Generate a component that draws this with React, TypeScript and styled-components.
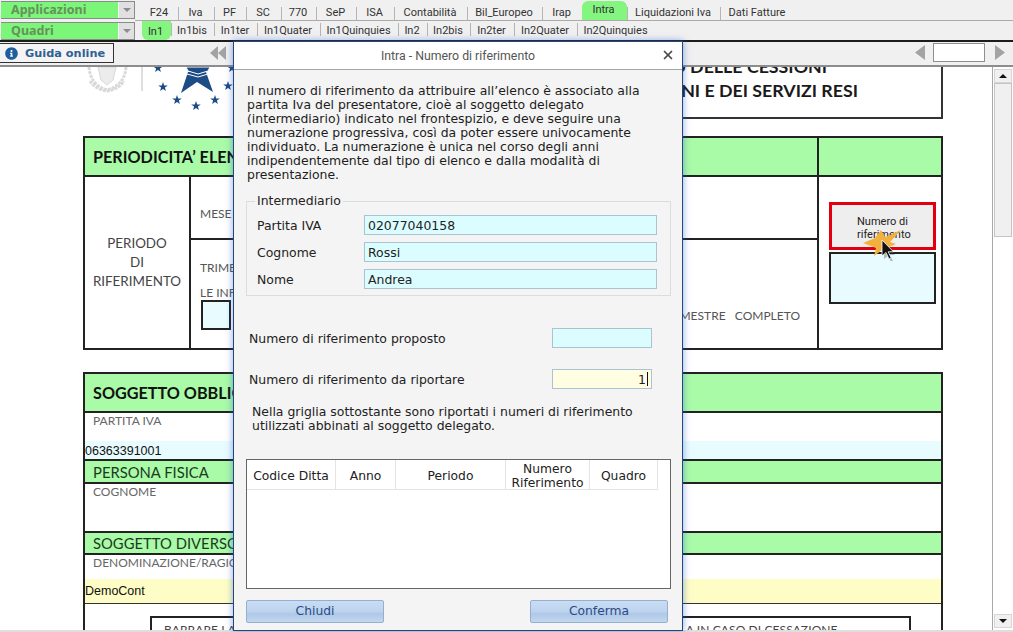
import * as React from 'react';
import styled, { createGlobalStyle } from 'styled-components';
import { FaInfoCircle } from 'react-icons/fa';
import { X } from 'lucide-react';

const GlobalStyle = createGlobalStyle`
  html, body {
    margin: 0;
    padding: 0;
    overflow: hidden;
    background: #f0f0f0;
  }
  * {
    box-sizing: border-box;
  }
`;

const Page = styled.div`
  position: relative;
  width: 1013px;
  height: 632px;
  overflow: hidden;
  display: flex;
  flex-direction: column;
  background: #f0f0f0;
`;

/* top menu */
const Menu = styled.div`
  height: 42px;
  flex: none;
  display: flex;
  border-bottom: 2px solid #1c1c1c;
  padding: 1px 0 0 1px;
`;
const Selects = styled.div`
  width: 134px;
  flex: none;
  display: flex;
  flex-direction: column;
  gap: 3px;
`;
const Select = styled.div`
  height: 18px;
  display: flex;
  border: 1px solid #8a8a8a;
  border-left: 0;
`;
const SelectValue = styled.div`
  flex: 1;
  background: #7cf678;
  color: #67905f;
  font: bold 12.5px/16px 'Noto Sans', sans-serif;
  padding-left: 10px;
`;
const SelectArrow = styled.div`
  width: 16px;
  background: #e0e0e0;
  border-left: 1px solid #f4f4f4;
  display: flex;
  align-items: center;
  justify-content: center;
  &::before {
    content: '';
    border-left: 4px solid transparent;
    border-right: 4px solid transparent;
    border-top: 4px solid #8c8c8c;
  }
`;
const TabRows = styled.div`
  flex: 1;
  display: flex;
  flex-direction: column;
  margin-top: -1px;
  padding-left: 7px;
`;
const TabRow = styled.div<{ $lined?: boolean }>`
  height: ${(p) => (p.$lined ? '21px' : '20px')};
  display: flex;
  align-items: ${(p) => (p.$lined ? 'flex-end' : 'flex-start')};
  margin-left: -7px;
  padding-left: 7px;
  border-bottom: ${(p) => (p.$lined ? '1px solid #ababab' : '0')};
`;
const Tab = styled.div<{ $w: number; $active?: boolean; $flip?: boolean }>`
  width: ${(p) => p.$w}px;
  height: ${(p) => (p.$active ? '19px' : '13px')};
  margin-top: ${(p) => (p.$flip && !p.$active ? '2px' : '0')};
  padding: ${(p) => (p.$flip ? '2px 2px 0 0' : '0 2px 2px 0')};
  display: flex;
  align-items: center;
  justify-content: center;
  font: 11px 'Roboto', sans-serif;
  color: #333;
  border-left: ${(p) => (p.$active ? '0' : '1px solid #b5b5b5')};
  background: ${(p) => (p.$active ? '#84f57f' : 'transparent')};
  border-radius: ${(p) => (p.$active ? (p.$flip ? '0 0 6px 6px' : '6px 6px 0 0') : '0')};
  &:first-child {
    border-left: 0;
  }
`;

/* toolbar */
const Toolbar = styled.div`
  height: 25px;
  flex: none;
  display: flex;
  align-items: center;
  border-bottom: 2px solid #8d8d8d;
  padding: 0 8px 2px 0;
`;
const GuideButton = styled.div`
  width: 114px;
  height: 20px;
  display: flex;
  align-items: center;
  gap: 7px;
  padding-left: 5px;
  margin-top: 1px;
  background: #f4f4f4;
  border: 1px solid #333;
  border-left: 0;
  color: #2f6090;
  font: bold 11.3px 'DejaVu Sans', sans-serif;
  svg {
    color: #1f5f9f;
    width: 13px;
    height: 13px;
  }
`;
const Pager = styled.div`
  margin-left: auto;
  display: flex;
  align-items: center;
  gap: 8px;
`;
const PagerInput = styled.div`
  width: 52px;
  height: 19px;
  margin-right: 2px;
  background: #fff;
  border: 1px solid #8f8f8f;
`;
const PagerArrow = styled.svg`
  width: 10px;
  height: 15px;
  fill: #a3a3a3;
`;
const RewindIcon = styled.svg`
  width: 16px;
  height: 14px;
  fill: #a3a3a3;
  margin-left: 96px;
`;

/* sheet behind the dialog */
const Main = styled.div`
  flex: 1;
  min-height: 0;
  display: flex;
`;
const Sheet = styled.div`
  flex: 1;
  background: #fff;
  padding-left: 83px;
  overflow: hidden;
  border-right: 1px solid #a8a8a8;
  font-family: 'Lato', sans-serif;
`;
const SheetInner = styled.div`
  width: 860px;
`;
const SheetHead = styled.div`
  height: 52px;
  display: flex;
`;
const Logos = styled.svg`
  width: 157px;
  height: 51px;
  flex: none;
`;
const TitleBox = styled.div`
  flex: 1;
  min-width: 0;
  border: 2px solid #333;
  border-top: 0;
  display: flex;
  flex-direction: column;
  justify-content: flex-end;
  align-items: flex-end;
  overflow: hidden;
  padding: 0 83px 15px 0;
  font-size: 17.8px;
  font-weight: 700;
  line-height: 24px;
  color: #1a1a1a;
  white-space: nowrap;
`;
const TitleLine = styled.div<{ $inset?: number }>`
  margin-right: ${(p) => p.$inset ?? 0}px;
`;
const PeriodBox = styled.div`
  margin-top: 17px;
  height: 214px;
  border: 2px solid #222;
  display: grid;
  grid-template-columns: 106px 626px 1fr;
  grid-template-rows: 39px 63px 1fr;
`;
const GreenHead = styled.div<{ $span?: number; $h?: number; $bold?: boolean }>`
  grid-column: span ${(p) => p.$span ?? 1};
  background: #a9fba7;
  border-bottom: 2px solid #222;
  padding-left: 8px;
  display: flex;
  align-items: center;
  height: ${(p) => (p.$h ? `${p.$h}px` : 'auto')};
  font-size: ${(p) => (p.$bold ? '16.2px' : '14.8px')};
  font-weight: ${(p) => (p.$bold ? 700 : 400)};
  color: ${(p) => (p.$bold ? '#111' : '#1d3a1f')};
  white-space: nowrap;
`;
const GreenEnd = styled(GreenHead)`
  border-left: 2px solid #222;
`;
const PeriodLabel = styled.div`
  grid-row: span 2;
  border-right: 2px solid #222;
  display: flex;
  align-items: center;
  justify-content: center;
  text-align: center;
  font-size: 13.4px;
  line-height: 19px;
  color: #444;
`;
const MonthCell = styled.div`
  border-bottom: 2px solid #222;
  padding: 29px 0 0 9px;
  font-size: 12px;
  color: #555;
`;
const QuarterCell = styled.div`
  padding: 20px 17px 0 9px;
  font-size: 12px;
  color: #555;
`;
const QuarterLine = styled.div`
  height: 25px;
`;
const QuarterBottom = styled.div`
  display: flex;
  justify-content: space-between;
`;
const TickBox = styled.div`
  width: 30px;
  height: 30px;
  margin: 0 0 0 1px;
  background: #e8fcff;
  border: 2px solid #222;
`;
const WholeQuarter = styled.div`
  white-space: pre;
  font-size: 12px;
  margin-top: 8px;
`;
const ActionCell = styled.div`
  grid-column: 3;
  grid-row: 2 / span 2;
  border-left: 2px solid #222;
  padding: 25px 0 0 10px;
  position: relative;
`;
const RefButton = styled.div`
  width: 107px;
  height: 48px;
  background: #eeeeee;
  border: 3px solid #e2000f;
  padding: 10px 0 0 25px;
  font: 11px/13px 'Roboto', sans-serif;
  color: #222;
`;
const RefValue = styled.div`
  width: 107px;
  height: 52px;
  margin-top: 2px;
  background: #e8fcff;
  border: 2px solid #222;
`;
const Pointer = styled.svg`
  position: absolute;
  left: 43px;
  top: 50px;
  width: 42px;
  height: 34px;
`;
const SubjectBox = styled.div`
  margin-top: 22px;
  border: 2px solid #222;
  border-bottom: 0;
  height: 300px;
`;
const FieldLabel = styled.div<{ $h: number; $lined?: boolean }>`
  height: ${(p) => p.$h}px;
  padding-left: 8px;
  border-bottom: ${(p) => (p.$lined ? '2px solid #222' : '0')};
  font-size: 12px;
  line-height: 15px;
  color: #666;
  white-space: nowrap;
`;
const Value = styled.div<{ $tone: string; $h: number; $line: string; $nudge?: number }>`
  height: ${(p) => p.$h}px;
  padding-top: ${(p) => p.$nudge ?? 0}px;
  background: ${(p) => p.$tone};
  border-bottom: ${(p) => p.$line};
  display: flex;
  align-items: center;
  font: 12.5px 'Liberation Sans', sans-serif;
  color: #111;
`;
const NoticeBox = styled.div`
  margin: 12px 0 0 65px;
  width: 761px;
  height: 60px;
  border: 2px solid #222;
  padding: 4px 0 0 12px;
  font-size: 12px;
  letter-spacing: 0.1px;
  line-height: 16px;
  color: #444;
  white-space: nowrap;
`;

/* scrollbar */
const Scrollbar = styled.div`
  width: 20px;
  flex: none;
  background: #fff;
  display: flex;
  flex-direction: column;
  padding: 2px 1px 2px 1px;
`;
const ScrollStep = styled.div<{ $down?: boolean }>`
  height: 14px;
  flex: none;
  background: #f0f0f0;
  border: 1px solid #d6d6d6;
  display: flex;
  align-items: center;
  justify-content: center;
  &::before {
    content: '';
    border-left: 4px solid transparent;
    border-right: 4px solid transparent;
    ${(p) => (p.$down ? 'border-top: 4px solid #111;' : 'border-bottom: 4px solid #111;')}
  }
`;
const ScrollThumb = styled.div`
  height: 154px;
  flex: none;
  background: #f0f0f0;
  border: 1px solid #c4c4c4;
`;
const ScrollTrack = styled.div`
  flex: 1;
`;
const BottomEdge = styled.div`
  height: 2px;
  flex: none;
  background: #dedede;
`;

/* dialog */
const Dialog = styled.div`
  position: absolute;
  left: 233px;
  top: 41px;
  width: 450px;
  height: 590px;
  background: #f4f4f4;
  border: 1px solid #1f4a78;
  box-shadow: 0 0 7px rgba(50, 90, 210, 0.55);
  font-family: 'DejaVu Sans', sans-serif;
  color: #222;
`;
const DialogTitle = styled.div`
  position: relative;
  height: 28px;
  background: #fff;
  border-bottom: 1px solid #a6a6a6;
  display: flex;
  align-items: center;
  justify-content: center;
  font: 12.3px 'Roboto', sans-serif;
  color: #555;
`;
const CloseButton = styled.div`
  position: absolute;
  right: 7px;
  top: 6px;
  display: flex;
  color: #4a4a4a;
`;
const DialogBody = styled.div`
  padding: 14px 0 0 12px;
`;
const Intro = styled.div`
  padding-left: 1px;
  font-size: 12.45px;
  line-height: 14px;
  white-space: pre;
  color: #1c1c1c;
`;
const Group = styled.fieldset`
  margin: 12px 0 0;
  padding: 7px 0 7px 10px;
  width: 425px;
  height: 102px;
  border: 1px solid #dcdcdc;
  display: flex;
  flex-direction: column;
  gap: 7px;
`;
const GroupTitle = styled.legend`
  margin-left: -2px;
  padding: 0 2px;
  font-size: 12.45px;
  line-height: 14px;
`;
const GroupRow = styled.div`
  display: flex;
  align-items: center;
  font-size: 12.45px;
`;
const GroupLabel = styled.div`
  width: 107px;
`;
const TextBox = styled.div<{ $w: number; $yellow?: boolean }>`
  width: ${(p) => p.$w}px;
  height: 20px;
  flex: none;
  display: flex;
  align-items: center;
  justify-content: ${(p) => (p.$yellow ? 'flex-end' : 'flex-start')};
  padding: 0 3px 0 3px;
  background: ${(p) => (p.$yellow ? '#fffde2' : '#dcfdff')};
  border: 1px solid #a9c3d3;
  font-size: 12.45px;
`;
const Caret = styled.span`
  width: 1px;
  height: 14px;
  background: #111;
  margin-left: 1px;
`;
const RefRow = styled.div<{ $top: number }>`
  width: 406px;
  margin-top: ${(p) => p.$top}px;
  padding-left: 3px;
  display: flex;
  align-items: center;
  justify-content: space-between;
  font-size: 12.45px;
`;
const GridNote = styled.div`
  margin-top: 16px;
  padding-left: 6px;
  font-size: 12.45px;
  line-height: 14px;
  white-space: pre;
`;
const Grid = styled.div`
  margin-top: 26px;
  width: 425px;
  height: 130px;
  background: #fff;
  border: 1px solid #666;
`;
const GridHead = styled.div`
  display: flex;
  height: 30px;
  width: 411px;
  border-bottom: 1px solid #e4e4e4;
`;
const GridCol = styled.div<{ $w: number }>`
  width: ${(p) => p.$w}px;
  padding-top: 2px;
  display: flex;
  align-items: center;
  justify-content: center;
  text-align: center;
  border-right: 1px solid #e4e4e4;
  font-size: 12.3px;
  line-height: 14px;
`;
const Actions = styled.div`
  margin-top: 11px;
  width: 422px;
  display: flex;
  justify-content: space-between;
`;
const ActionButton = styled.div`
  width: 138px;
  height: 23px;
  padding-bottom: 2px;
  display: flex;
  align-items: center;
  justify-content: center;
  border: 1px solid #94afcf;
  border-radius: 2px;
  background: linear-gradient(#c9dcf3 0%, #bdd3ee 50%, #aec8e6 62%, #c3d8f0 100%);
  color: #2b4a86;
  font-size: 12.3px;
`;

const menuTabs: [string, number][] = [
  ['F24', 36], ['Iva', 36], ['PF', 32], ['SC', 35], ['770', 35], ['SeP', 40], ['ISA', 38],
  ['Contabilità', 73], ['Bil_Europeo', 75], ['Irap', 40], ['Intra', 45],
  ['Liquidazioni Iva', 93], ['Dati Fatture', 75],
];
const formTabs: [string, number][] = [
  ['In1', 29], ['In1bis', 43], ['In1ter', 43], ['In1Quater', 63], ['In1Quinquies', 78],
  ['In2', 29], ['In2bis', 43], ['In2ter', 44], ['In2Quater', 63], ['In2Quinquies', 78],
];
const gridCols: [React.ReactNode, number][] = [
  ['Codice Ditta', 89], ['Anno', 60], ['Periodo', 110], [<>Numero<br />Riferimento</>, 84], ['Quadro', 68],
];
const intro = `Il numero di riferimento da attribuire all’elenco è associato alla
partita Iva del presentatore, cioè al soggetto delegato
(intermediario) indicato nel frontespizio, e deve seguire una
numerazione progressiva, così da poter essere univocamente
individuato. La numerazione è unica nel corso degli anni
indipendentemente dal tipo di elenco e dalla modalità di
presentazione.`;

const starPoints = (cx: number, cy: number, r: number) =>
  Array.from({ length: 10 }, (_, i) => {
    const a = (Math.PI / 5) * i - Math.PI / 2;
    const d = i % 2 ? r * 0.4 : r;
    return `${(cx + d * Math.cos(a)).toFixed(1)},${(cy + d * Math.sin(a)).toFixed(1)}`;
  }).join(' ');

const stars = [[75, 1], [80, 20], [94, 33], [113, 39], [132, 33], [145, 19], [149, 1]];

const App = () => (
  <Page>
    <GlobalStyle />
    <Menu>
      <Selects>
        <Select>
          <SelectValue>Applicazioni</SelectValue>
          <SelectArrow />
        </Select>
        <Select>
          <SelectValue>Quadri</SelectValue>
          <SelectArrow />
        </Select>
      </Selects>
      <TabRows>
        <TabRow $lined>
          {menuTabs.map(([name, w]) => (
            <Tab key={name} $w={w} $active={name === 'Intra'}>{name}</Tab>
          ))}
        </TabRow>
        <TabRow>
          {formTabs.map(([name, w]) => (
            <Tab key={name} $w={w} $active={name === 'In1'} $flip>{name}</Tab>
          ))}
        </TabRow>
      </TabRows>
    </Menu>

    <Toolbar>
      <GuideButton>
        <FaInfoCircle />
        Guida online
      </GuideButton>
      <RewindIcon viewBox="0 0 16 14">
        <path d="M8 0v14L0 7zM16 0v14L8 7z" />
      </RewindIcon>
      <Pager>
        <PagerArrow viewBox="0 0 10 15"><path d="M10 0v15L0 7.5z" /></PagerArrow>
        <PagerInput />
        <PagerArrow viewBox="0 0 10 15"><path d="M0 0v15l10-7.5z" /></PagerArrow>
      </Pager>
    </Toolbar>

    <Main>
      <Sheet>
        <SheetInner>
          <SheetHead>
            <Logos viewBox="0 0 157 51">
              <g fill="none" stroke="#d9d9d9" strokeWidth="3" strokeDasharray="3 1">
                <path d="M6 0c1 13 8 20 18 23M43 0c-1 13-8 20-19 23" />
                <path d="M7 14c4 6 10 9 17 10 7-1 13-4 17-10" />
              </g>
              <path d="M15 0h18l-3 13-6 5-6-5z" fill="#ececec" stroke="#d8d8d8" />
              <path d="M59 0v24" stroke="#c9c9c9" strokeWidth="1.2" />
              <path d="M98 26l7-21h18l7 20-16-10z" fill="#1d4b86" />
              <path d="M103 0h24l-2 4-10 3-10-3zM104 7l11 3 10-3" fill="#1d4b86" stroke="#fff" strokeWidth="1" />
              {stars.map(([x, y]) => (
                <polygon key={x} points={starPoints(x, y, 5)} fill="#1d4b86" />
              ))}
            </Logos>
            <TitleBox>
              <TitleLine $inset={31}>ELENCO RIEPILOGATIVO DELLE CESSIONI</TitleLine>
              <TitleLine>INTRACOMUNITARIE DI BENI E DEI SERVIZI RESI</TitleLine>
            </TitleBox>
          </SheetHead>

          <PeriodBox>
            <GreenHead $span={2} $bold>PERIODICITA’ ELENCO</GreenHead>
            <GreenEnd />
            <PeriodLabel>PERIODO<br />DI<br />RIFERIMENTO</PeriodLabel>
            <MonthCell>MESE</MonthCell>
            <QuarterCell>
              <QuarterLine>TRIMESTRE</QuarterLine>
              LE INFORMAZIONI
              <QuarterBottom>
                <TickBox />
                <WholeQuarter>TRIMESTRE   COMPLETO</WholeQuarter>
              </QuarterBottom>
            </QuarterCell>
            <ActionCell>
              <RefButton>Numero di<br />riferimento</RefButton>
              <RefValue />
              <Pointer viewBox="0 0 42 34">
                <polygon
                  points="1,16 13,11 19,3 23,10 39,3 28,15 34,17 27,20 25,28 20,23 12,29 14,21"
                  fill="#f2b13f"
                />
                <path d="M20 13v17l4-3 3 6 2-1-3-6h5z" fill="#000" opacity=".25" transform="translate(2 2)" />
                <path d="M20 13v16l4-3.5 3 6.5 2.2-1-3-6.2h5.3z" fill="#111" stroke="#fff" strokeWidth=".8" />
              </Pointer>
            </ActionCell>
          </PeriodBox>

          <SubjectBox>
            <GreenHead $h={39} $bold>SOGGETTO OBBLIGATO</GreenHead>
            <FieldLabel $h={28}>PARTITA IVA</FieldLabel>
            <Value $tone="#e8fcff" $h={20} $line="2px solid #222" $nudge={1}>06363391001</Value>
            <GreenHead $h={23}>PERSONA FISICA</GreenHead>
            <FieldLabel $h={49} $lined>COGNOME</FieldLabel>
            <GreenHead $h={22}>SOGGETTO DIVERSO</GreenHead>
            <FieldLabel $h={24}>DENOMINAZIONE/RAGIONE SOCIALE</FieldLabel>
            <Value $tone="#fefdc5" $h={25} $line="1px solid #333">DemoCont</Value>
            <NoticeBox>BARRARE LA CASELLA SE L’ELENCO È RIFERITO ALL’ULTIMO PERIODO DELL’ATTIVITÀ, QUELLA IN CASO DI CESSAZIONE</NoticeBox>
          </SubjectBox>
        </SheetInner>
      </Sheet>
      <Scrollbar>
        <ScrollStep />
        <ScrollThumb />
        <ScrollTrack />
        <ScrollStep $down />
      </Scrollbar>
    </Main>
    <BottomEdge />

    <Dialog>
      <DialogTitle>
        Intra - Numero di riferimento
        <CloseButton><X size={14} strokeWidth={3} /></CloseButton>
      </DialogTitle>
      <DialogBody>
        <Intro>{intro}</Intro>
        <Group>
          <GroupTitle>Intermediario</GroupTitle>
          <GroupRow><GroupLabel>Partita IVA</GroupLabel><TextBox $w={293}>02077040158</TextBox></GroupRow>
          <GroupRow><GroupLabel>Cognome</GroupLabel><TextBox $w={293}>Rossi</TextBox></GroupRow>
          <GroupRow><GroupLabel>Nome</GroupLabel><TextBox $w={293}>Andrea</TextBox></GroupRow>
        </Group>
        <RefRow $top={32}>
          Numero di riferimento proposto
          <TextBox $w={100} />
        </RefRow>
        <RefRow $top={21}>
          Numero di riferimento da riportare
          <TextBox $w={100} $yellow>1<Caret /></TextBox>
        </RefRow>
        <GridNote>{`Nella griglia sottostante sono riportati i numeri di riferimento
utilizzati abbinati al soggetto delegato.`}</GridNote>
        <Grid>
          <GridHead>
            {gridCols.map(([label, w], i) => (
              <GridCol key={i} $w={w}>{label}</GridCol>
            ))}
          </GridHead>
        </Grid>
        <Actions>
          <ActionButton>Chiudi</ActionButton>
          <ActionButton>Conferma</ActionButton>
        </Actions>
      </DialogBody>
    </Dialog>
  </Page>
);

export default App;
